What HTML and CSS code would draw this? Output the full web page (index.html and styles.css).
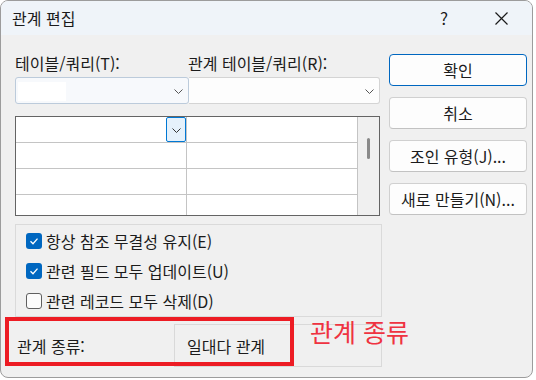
FILE: index.html
```html
<!DOCTYPE html>
<html lang="ko">
<head>
<meta charset="utf-8">
<title>관계 편집</title>
<link rel="stylesheet" href="styles.css">
</head>
<body>
<div class="window">
  <div class="titlebar">
    <span class="title">관계 편집</span>
    <span class="help">?</span>
    <span class="close">
      <svg width="13" height="13" viewBox="0 0 13 13"><path d="M0.5 0.5 L12.5 12.5 M12.5 0.5 L0.5 12.5" stroke="#1a1a1a" stroke-width="1.2" fill="none"/></svg>
    </span>
  </div>
  <div class="body">
    <div class="left">
      <div class="labels">
        <span class="label">테이블/쿼리(T):</span>
        <span class="label">관계 테이블/쿼리(R):</span>
      </div>
      <div class="combos">
        <div class="combo combo-active">
          <span class="combo-field"></span>
          <svg class="chev" width="9" height="5" viewBox="0 0 9 5"><polyline points="0.5,0.5 4.5,4.5 8.5,0.5" stroke="#555" stroke-width="1" fill="none"/></svg>
        </div>
        <div class="combo combo-plain">
          <svg class="chev" width="9" height="5" viewBox="0 0 9 5"><polyline points="0.5,0.5 4.5,4.5 8.5,0.5" stroke="#555" stroke-width="1" fill="none"/></svg>
        </div>
      </div>
      <div class="grid">
        <div class="cell cell-first">
          <span class="cell-drop">
            <svg width="9" height="5" viewBox="0 0 9 5"><polyline points="0.5,0.5 4.5,4.5 8.5,0.5" stroke="#333" stroke-width="1" fill="none"/></svg>
          </span>
        </div>
        <div class="cell"></div>
        <div class="scroll"><span class="thumb"></span></div>
        <div class="cell"></div>
        <div class="cell"></div>
        <div class="cell"></div>
        <div class="cell"></div>
        <div class="cell"></div>
        <div class="cell"></div>
      </div>
      <div class="options">
        <div class="option">
          <span class="check checked"><svg width="16" height="16" viewBox="0 0 16 16"><path d="M4.5 8.2 L7 10.7 L11.5 5.6" stroke="#fff" stroke-width="1.3" fill="none"/></svg></span>
          <span>항상 참조 무결성 유지(E)</span>
        </div>
        <div class="option">
          <span class="check checked"><svg width="16" height="16" viewBox="0 0 16 16"><path d="M4.5 8.2 L7 10.7 L11.5 5.6" stroke="#fff" stroke-width="1.3" fill="none"/></svg></span>
          <span>관련 필드 모두 업데이트(U)</span>
        </div>
        <div class="option">
          <span class="check"></span>
          <span>관련 레코드 모두 삭제(D)</span>
        </div>
      </div>
      <div class="reltype">
        <span class="rel-label">관계 종류:</span>
        <span class="rel-box">일대다 관계</span>
        <span class="highlight"></span>
        <span class="annot">관계 종류</span>
      </div>
    </div>
    <div class="buttons">
      <button class="btn btn-default">확인</button>
      <button class="btn">취소</button>
      <button class="btn">조인 유형(J)...</button>
      <button class="btn">새로 만들기(N)...</button>
    </div>
  </div>
</div>
</body>
</html>
```
FILE: styles.css
```css
html, body {
  margin: 0;
  padding: 0;
  background: #ffffff;
}
body {
  font-family: "Noto Sans CJK KR", "Noto Sans", sans-serif;
  font-size: 16px;
  color: #1b1b1b;
}
.window {
  width: 533px;
  height: 378px;
  box-sizing: border-box;
  border: 1px solid #9c9c9c;
  border-radius: 8px;
  overflow: hidden;
  background: #f0f0f0;
  display: flex;
  flex-direction: column;
}
.titlebar {
  height: 34px;
  flex: none;
  background: #eff4f9;
  display: flex;
  align-items: center;
  padding-left: 11px;
}
.title {
  font-size: 16px;
  line-height: 20px;
  flex: 1;
  margin-top: -1px;
}
.help {
  font-size: 17px;
  line-height: 20px;
  width: 20px;
  text-align: center;
  margin-right: 41px;
  margin-top: -1px;
}
.close {
  display: flex;
  width: 13px;
  height: 13px;
  margin-right: 24px;
}
.body {
  flex: 1;
  display: flex;
  padding: 18px 0 0 14px;
}
.left {
  width: 367px;
  display: flex;
  flex-direction: column;
}
.labels {
  display: grid;
  grid-template-columns: 173px 1fr;
  line-height: 20px;
  height: 20px;
}
.combos {
  margin-top: 4px;
  display: grid;
  grid-template-columns: 174px 191px;
  width: 365px;
  height: 27px;
}
.combo {
  box-sizing: border-box;
  border: 1px solid #d4d4d4;
  border-radius: 3px;
  display: flex;
  align-items: center;
  justify-content: flex-end;
  padding-right: 5px;
  position: relative;
}
.combo-active {
  border-color: #bccbdb;
  background: #f7f9fc;
  justify-content: space-between;
  padding-left: 2px;
}
.combo-plain {
  background: #fdfdfd;
  border-left: none;
  border-radius: 0 3px 3px 0;
}
.combo-field {
  width: 48px;
  height: 19px;
  background: #ffffff;
  margin-top: 2px;
}
.chev {
  display: block;
  margin-top: 1px;
}
.grid {
  margin-top: 12px;
  width: 365px;
  box-sizing: border-box;
  border: 1px solid #646464;
  display: grid;
  grid-template-columns: 170px 170px 21px;
  grid-template-rows: 25px 25px 25px 20px;
  gap: 1px;
  background: #c4c4c4;
}
.cell {
  background: #ffffff;
}
.cell-first {
  display: flex;
  justify-content: flex-end;
}
.cell-drop {
  width: 20px;
  height: 25px;
  box-sizing: border-box;
  border: 1px solid #0078d4;
  border-radius: 2px;
  background: #e5f1fb;
  display: flex;
  align-items: center;
  justify-content: center;
  padding-top: 1px;
}
.scroll {
  grid-column: 3;
  grid-row: 1 / span 4;
  background: #f0f0f0;
  display: flex;
  justify-content: center;
  padding-top: 21px;
}
.thumb {
  width: 3px;
  height: 21px;
  border-radius: 2px;
  background: #8a8a8a;
}
.options {
  margin-top: 8px;
  width: 367px;
  box-sizing: border-box;
  border: 1px solid #dadada;
  padding: 1px 0 0 10px;
}
.option {
  height: 30px;
  display: flex;
  align-items: center;
  gap: 4px;
  line-height: 20px;
}
.check {
  width: 16px;
  height: 16px;
  box-sizing: border-box;
  border-radius: 3px;
  border: 1px solid #5f5f5f;
  background: #fbfbfb;
  display: block;
  flex: none;
}
.check svg {
  display: block;
}
.check.checked {
  border: none;
  background: #0067c0;
}
.reltype {
  margin-top: 7px;
  height: 43px;
  display: flex;
  position: relative;
}
.rel-label {
  flex: 1;
  display: flex;
  align-items: center;
  padding-left: 2px;
  line-height: 20px;
}
.rel-box {
  width: 208px;
  box-sizing: border-box;
  border: 1px solid #d9d9d9;
  display: flex;
  align-items: center;
  padding-left: 12px;
  line-height: 20px;
}
.highlight {
  position: absolute;
  left: -10px;
  top: -7px;
  width: 289px;
  height: 49px;
  box-sizing: border-box;
  border: 4px solid #ed1c24;
}
.annot {
  position: absolute;
  left: 295px;
  top: -8px;
  font-size: 25px;
  line-height: 30px;
  color: #ef3341;
  white-space: nowrap;
}
.buttons {
  margin-left: 7px;
  margin-top: 1px;
  width: 138px;
  display: flex;
  flex-direction: column;
  gap: 11px;
}
.btn {
  height: 32px;
  box-sizing: border-box;
  border: 1px solid #d0d0d0;
  border-bottom-color: #c2c2c2;
  border-radius: 4px;
  background: #fdfdfd;
  font-family: "Noto Sans CJK KR", "Noto Sans", sans-serif;
  font-size: 16px;
  color: #1b1b1b;
  padding: 0;
  line-height: 20px;
}
.btn-default {
  border-color: #0067c0;
}
```
